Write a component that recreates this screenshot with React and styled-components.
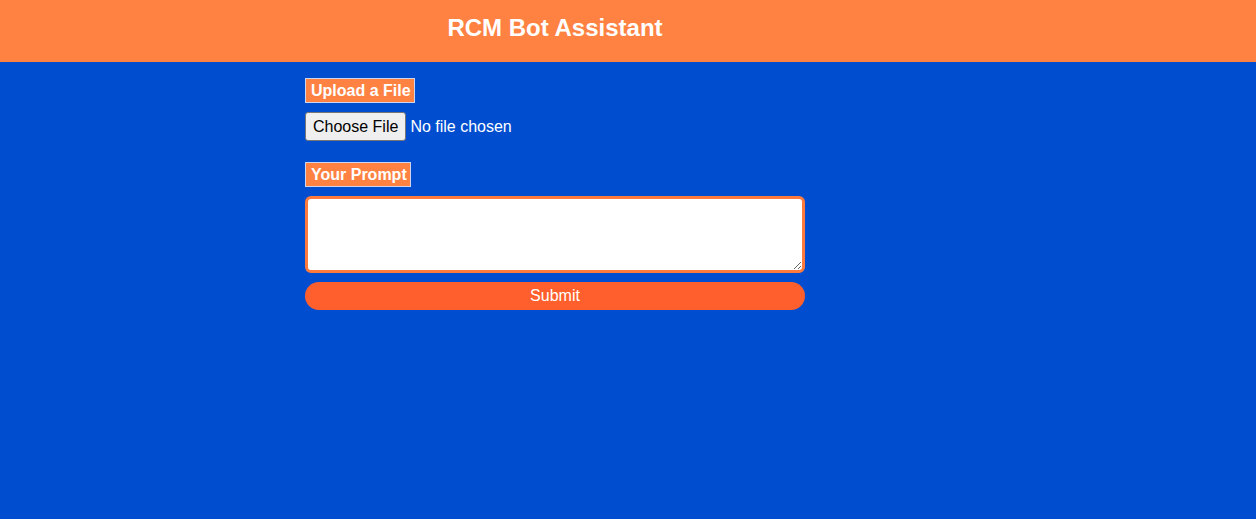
import React from 'react'
import styled, { createGlobalStyle } from 'styled-components'

const GlobalStyle = createGlobalStyle`
  html, body {
    margin: 0;
    padding: 0;
    background: #004ecf;
    font-family: "Liberation Sans", Arial, sans-serif;
  }
`

const Page = styled.div`
  min-height: 519px;
  background: #004ecf;
`

const Header = styled.header`
  height: 62px;
  background: #ff8243;
  display: flex;
  align-items: center;
  padding-left: 305px;
  padding-bottom: 7px;
  box-sizing: border-box;
`

const Title = styled.h1`
  width: 500px;
  margin: 0;
  text-align: center;
  color: #fff;
  font-size: 24px;
  font-weight: bold;
`

const Form = styled.form`
  width: 500px;
  margin-left: 305px;
  padding-top: 16px;
  display: flex;
  flex-direction: column;
  align-items: flex-start;
`

const Label = styled.label`
  display: inline-block;
  background: #ff8243;
  color: #fff;
  font-weight: bold;
  font-size: 16px;
  line-height: 17px;
  padding: 3px 3px 3px 5px;
  border: 1px solid #c9d6ee;
  margin-bottom: 9px;
`

const FileInput = styled.input`
  color: #fff;
  font-family: "Liberation Sans", Arial, sans-serif;
  font-size: 16px;
  margin: 0 0 21px 0;

  &::file-selector-button {
    font-family: "Liberation Sans", Arial, sans-serif;
    font-size: 16px;
    color: #000;
    background: #efefef;
    border: 1px solid #767676;
    border-radius: 3px;
    padding: 5px 7px 4px;
    margin-right: 4px;
  }
`

const TextArea = styled.textarea`
  width: 500px;
  height: 77px;
  box-sizing: border-box;
  border: 3px solid #ff7a3d;
  border-radius: 6px;
  background: #fff;
  margin: 0 0 9px 0;
  font-family: "Liberation Sans", Arial, sans-serif;
  font-size: 16px;
  outline: none;
`

const SubmitButton = styled.button`
  width: 500px;
  height: 28px;
  border: none;
  border-radius: 14px;
  background: #ff5f2d;
  color: #fff;
  font-family: "Liberation Sans", Arial, sans-serif;
  font-size: 16px;
  cursor: pointer;
`

export default function App() {
  return (
    <Page>
      <GlobalStyle />
      <Header>
        <Title>RCM Bot Assistant</Title>
      </Header>
      <Form onSubmit={e => e.preventDefault()}>
        <Label htmlFor="file">Upload a File</Label>
        <FileInput id="file" type="file" />
        <Label htmlFor="prompt">Your Prompt</Label>
        <TextArea id="prompt" />
        <SubmitButton type="submit">Submit</SubmitButton>
      </Form>
    </Page>
  )
}
